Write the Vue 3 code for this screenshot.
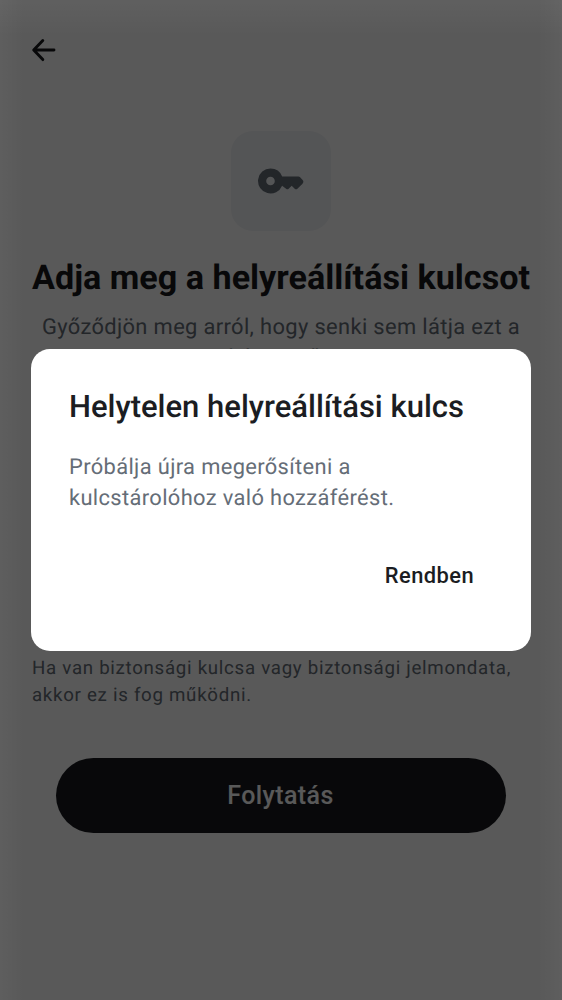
<script setup>
import { ref } from 'vue'

const open = ref(true)
</script>

<template>
  <main class="screen">
    <header class="bar">
      <button class="back" aria-label="Vissza">
        <svg width="26" height="26" viewBox="0 0 26 26" fill="none" stroke="#17191c" stroke-width="2.9" stroke-linecap="round" stroke-linejoin="round">
          <path d="M12.8 3.5 3.7 13l9.1 9.6M4 13H24" />
        </svg>
      </button>
    </header>
    <div class="tile">
      <svg width="46" height="26" viewBox="0 0 46 26">
        <path fill="#656d77" fill-rule="evenodd" d="M12.5.5a12.5 12.5 0 1 0 11.6 17.2l4.3 3.2a1.6 1.6 0 0 0 2 0l3.3-3.1 3.3 3.1a1.6 1.6 0 0 0 2.1 0l5.2-5a3 3 0 0 0 .1-4.2l-2.3-2.4a2.4 2.4 0 0 0-1.7-.7H24.2A12.5 12.5 0 0 0 12.5.5Zm0 8.2a4.3 4.3 0 1 1 0 8.6 4.3 4.3 0 0 1 0-8.6Z" />
      </svg>
    </div>
    <h1 class="title">Adja meg a helyreállítási kulcsot</h1>
    <p class="subtitle">Győződjön meg arról, hogy senki sem látja ezt a képernyőt!</p>
    <p class="hint">Ha van biztonsági kulcsa vagy biztonsági jelmondata, akkor ez is fog működni.</p>
    <button class="submit">Folytatás</button>
  </main>
  <div v-if="open" class="scrim">
    <section class="dialog" role="alertdialog">
      <h2 class="dialog-title">Helytelen helyreállítási kulcs</h2>
      <p class="dialog-text">Próbálja újra megerősíteni a kulcstárolóhoz való hozzáférést.</p>
      <button class="confirm" @click="open = false">Rendben</button>
    </section>
  </div>
</template>

<style>
body {
  background: #fff;
  overflow: hidden;
}
</style>

<style scoped>
* {
  box-sizing: border-box;
  margin: 0;
  padding: 0;
}
.screen,
.scrim {
  font-family: Roboto, "Noto Sans", sans-serif;
  text-rendering: geometricPrecision;
}
button {
  border: 0;
  background: none;
  font-family: inherit;
}
.screen {
  height: 1000px;
  display: flex;
  flex-direction: column;
  align-items: center;
}
.bar {
  width: 100%;
  height: 131px;
  padding: 37px 0 0 30px;
}
.back {
  display: block;
  width: 26px;
  height: 26px;
}
.back svg {
  display: block;
}
.tile {
  width: 100px;
  height: 100px;
  border-radius: 22px;
  background: #f0f2f5;
  display: flex;
  align-items: center;
  justify-content: center;
}
.title {
  margin-top: 25px;
  font-size: 34.15px;
  line-height: 44px;
  font-weight: 700;
  white-space: nowrap;
  color: #17191c;
}
.subtitle {
  width: 498px;
  margin-top: 12px;
  font-size: 21.9px;
  line-height: 31px;
  letter-spacing: 0.35px;
  text-align: center;
  color: #656d77;
}
.hint {
  width: 498px;
  margin-top: 281px;
  font-size: 18.7px;
  line-height: 26.5px;
  letter-spacing: 0.71px;
  color: #656d77;
}
.submit {
  width: 450px;
  height: 75px;
  margin-top: 50px;
  border-radius: 38px;
  background: #17191e;
  color: #fff;
  font-size: 25px;
  font-weight: 500;
  letter-spacing: 0.4px;
  padding-right: 1px;
}
.scrim {
  position: absolute;
  inset: 0;
  overflow: hidden;
  display: flex;
  justify-content: center;
  align-items: center;
  background:
    linear-gradient(to bottom, rgba(255, 255, 255, 0.04), transparent 36px),
    linear-gradient(to right, rgba(255, 255, 255, 0.03), transparent 24px),
    linear-gradient(to left, rgba(255, 255, 255, 0.03), transparent 24px),
    rgba(0, 0, 0, 0.65);
}
.dialog {
  width: 500px;
  height: 301.5px;
  padding: 38px;
  border-radius: 19px;
  background: #fff;
  display: flex;
  flex-direction: column;
}
.dialog-title {
  font-size: 31px;
  line-height: 39px;
  font-weight: 500;
  color: #1b1d22;
}
.dialog-text {
  width: 350px;
  margin-top: 26px;
  font-size: 21.9px;
  line-height: 31px;
  letter-spacing: 0.35px;
  color: #656d77;
}
.confirm {
  align-self: flex-end;
  margin: 45px 19px 0 0;
  font-size: 21.9px;
  line-height: 34px;
  font-weight: 500;
  letter-spacing: 0.42px;
  color: #1b1d22;
}
</style>
